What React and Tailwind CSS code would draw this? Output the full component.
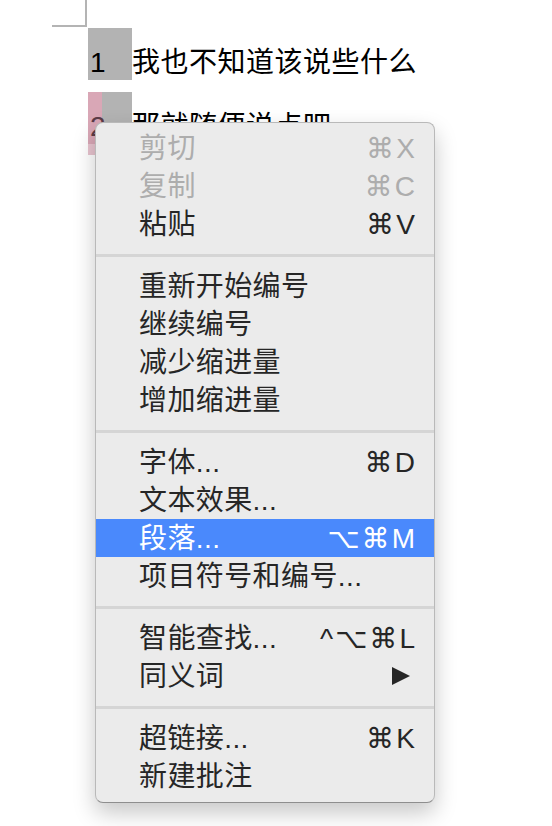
import React from 'react';

const FONT = { fontFamily: '"Liberation Sans", "Noto Sans CJK SC", sans-serif' };
const KEYS = { fontFamily: '"Liberation Sans", "DejaVu Sans", sans-serif' };

const groups = [
  [
    { label: '剪切', keys: '⌘X', disabled: true },
    { label: '复制', keys: '⌘C', disabled: true },
    { label: '粘贴', keys: '⌘V' },
  ],
  [
    { label: '重新开始编号' },
    { label: '继续编号' },
    { label: '减少缩进量' },
    { label: '增加缩进量' },
  ],
  [
    { label: '字体...', keys: '⌘D' },
    { label: '文本效果...' },
    { label: '段落...', keys: '⌥⌘M', active: true },
    { label: '项目符号和编号...' },
  ],
  [
    { label: '智能查找...', keys: '^⌥⌘L' },
    { label: '同义词', submenu: true },
  ],
  [
    { label: '超链接...', keys: '⌘K' },
    { label: '新建批注' },
  ],
];

function MenuRow({ item }) {
  const color = item.active
    ? 'bg-[#4a89fc] text-white'
    : item.disabled
    ? 'text-[#adadad]'
    : 'text-[#262626]';
  return (
    <div className={`flex h-[38px] items-center justify-between pl-[43px] pr-[19px] ${color}`}>
      <span className="pt-[2px] text-[28px] leading-[28px] tracking-[0.4px]" style={FONT}>
        {item.label}
      </span>
      {item.keys && (
        <span className="mr-[-2px] pt-[2px] text-[28px] leading-[28px] tracking-[2px]" style={KEYS}>
          {item.keys}
        </span>
      )}
      {item.submenu && (
        <svg width="18" height="18" viewBox="0 0 18 18" className="mr-[5px]">
          <polygon points="0,0 18,9 0,18" fill="#262626" />
        </svg>
      )}
    </div>
  );
}

export default function App() {
  return (
    <div className="relative h-[826px] w-[552px] overflow-hidden bg-white" style={FONT}>
      {/* page corner mark */}
      <div className="absolute left-[85px] top-0 h-[27px] w-[2px] bg-[#b4b4b4]" />
      <div className="absolute left-[52px] top-[25px] h-[2px] w-[35px] bg-[#b4b4b4]" />

      <div className="flex flex-col gap-[12px] pl-[88px] pt-[28px]">
        <div className="flex h-[52px] items-start">
          <div className="h-[52px] w-[44px] bg-[#b3b3b3] pl-[2px] pt-[21px] text-[28px] leading-[28px] text-black">
            1
          </div>
          <div className="pt-[21px] text-[28px] leading-[28px] tracking-[0.5px] text-black">
            我也不知道该说些什么
          </div>
        </div>
        <div className="flex h-[52px] items-start">
          <div className="flex">
            <div className="flex flex-col">
              <div className="h-[52px] w-[14px] bg-[#d9a7b6]" />
              <div className="h-[11px] w-[14px] bg-[#e8c4cf]" />
            </div>
            <div className="h-[52px] w-[30px] bg-[#b3b3b3]" />
          </div>
          <div className="absolute left-[90px] top-[113px] text-[28px] leading-[28px] text-[#5b3b47]">2</div>
          <div className="pt-[21px] text-[28px] leading-[28px] tracking-[0.5px] text-black">
            那就随便说点吧
          </div>
        </div>
      </div>

      {/* context menu */}
      <div className="absolute left-[95px] top-[122px] w-[340px] rounded-[8px] border border-[#b9b9b9] border-b-[#8e8e8e] bg-[#ebebeb] pb-[7px] pt-[6px] shadow-[0_10px_22px_rgba(0,0,0,0.22)]">
        {groups.map((group, gi) => (
          <div key={gi}>
            {gi > 0 && (
              <div className="flex h-[24px] items-center">
                <div className="h-[3px] w-full bg-[#d5d5d5]" />
              </div>
            )}
            {group.map((item) => (
              <MenuRow key={item.label} item={item} />
            ))}
          </div>
        ))}
      </div>
    </div>
  );
}
